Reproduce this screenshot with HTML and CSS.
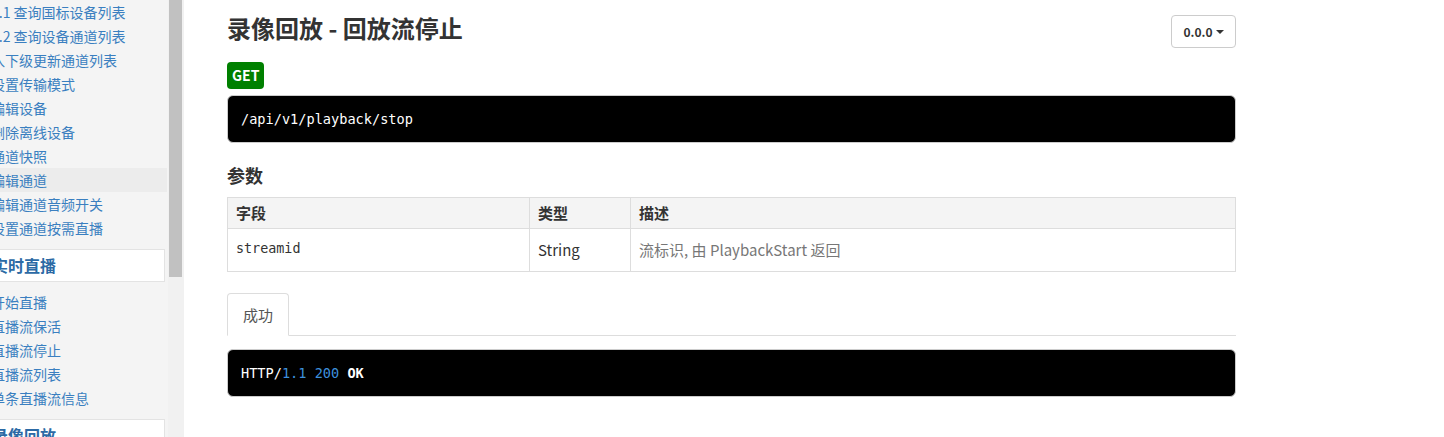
FILE: index.html
```html
<!DOCTYPE html>
<html lang="zh">
<head>
<meta charset="utf-8">
<title>录像回放 - 回放流停止</title>
<link rel="stylesheet" href="styles.css">
</head>
<body>
<div class="page">
  <aside class="sidebar">
    <div class="nav-pane">
      <div class="nav">
        <a class="item" href="#">2.1 查询国标设备列表</a>
        <a class="item" href="#">2.2 查询设备通道列表</a>
        <a class="item" href="#">入下级更新通道列表</a>
        <a class="item" href="#">设置传输模式</a>
        <a class="item" href="#">编辑设备</a>
        <a class="item" href="#">删除离线设备</a>
        <a class="item" href="#">通道快照</a>
        <a class="item active" href="#">编辑通道</a>
        <a class="item" href="#">编辑通道音频开关</a>
        <a class="item" href="#">设置通道按需直播</a>
        <div class="group">实时直播</div>
        <a class="item" href="#">开始直播</a>
        <a class="item" href="#">直播流保活</a>
        <a class="item" href="#">直播流停止</a>
        <a class="item" href="#">直播流列表</a>
        <a class="item" href="#">单条直播流信息</a>
        <div class="group">录像回放</div>
      </div>
    </div>
    <div class="scrollbar"><div class="thumb"></div></div>
  </aside>

  <main class="content">
    <div class="head">
      <h1 class="title">录像回放 - 回放流停止</h1>
      <button class="version">0.0.0<span class="caret"></span></button>
    </div>
    <span class="method">GET</span>
    <pre class="code">/api/v1/playback/stop</pre>

    <h2 class="sub">参数</h2>
    <table class="params">
      <colgroup>
        <col class="c1"><col class="c2"><col class="c3">
      </colgroup>
      <thead>
        <tr><th>字段</th><th>类型</th><th>描述</th></tr>
      </thead>
      <tbody>
        <tr><td class="mono">streamid</td><td>String</td><td class="desc">流标识, 由 PlaybackStart 返回</td></tr>
      </tbody>
    </table>

    <div class="tabs"><span class="tab">成功</span></div>
    <pre class="code resp">HTTP/<span class="num">1.1</span> <span class="num">200</span> <span class="ok">OK</span></pre>
  </main>
</div>
</body>
</html>
```

FILE: styles.css
```css
html, body {
  margin: 0;
  padding: 0;
  background: #fff;
}
body {
  font-family: "Noto Sans CJK SC", sans-serif;
  color: #333;
  height: 437px;
  overflow: hidden;
}
.page {
  display: flex;
  align-items: flex-start;
  height: 437px;
}

/* sidebar */
.sidebar {
  display: flex;
  width: 184px;
  height: 437px;
  flex-shrink: 0;
}
.nav-pane {
  width: 168px;
  height: 437px;
  background: #f4f4f4;
  overflow: hidden;
}
.nav {
  margin-left: -20px;
  width: 187px;
  display: flex;
  flex-direction: column;
}
.item {
  display: block;
  height: 24px;
  line-height: 24px;
  padding-left: 11px;
  font-size: 14px;
  color: #3a7fc0;
  text-decoration: none;
  white-space: nowrap;
}
.item.active {
  background: #ececec;
}
.group {
  margin: 9px 2px 8px 0;
  height: 31px;
  line-height: 31px;
  padding-left: 11px;
  background: #fff;
  border: 1px solid #e3e3e3;
  font-size: 16px;
  font-weight: bold;
  color: #2c6aa5;
  white-space: nowrap;
}
.scrollbar {
  width: 16px;
  height: 437px;
  background: #f1f1f1;
  padding-left: 1px;
  box-sizing: border-box;
}
.thumb {
  width: 13px;
  height: 277px;
  background: #c1c1c1;
}

/* content */
.content {
  margin-left: 43px;
  width: 1009px;
  display: flex;
  flex-direction: column;
  align-items: flex-start;
}
.head {
  width: 100%;
  display: flex;
  justify-content: space-between;
  align-items: flex-start;
  padding-top: 12px;
  margin-bottom: 14px;
}
.title {
  margin: 0;
  font-size: 24px;
  line-height: 32px;
  font-weight: bold;
  color: #333;
}
.version {
  margin-top: 3px;
  width: 65px;
  height: 33px;
  background: #fff;
  border: 1px solid #ccc;
  border-radius: 4px;
  font-family: "Noto Sans CJK SC", sans-serif;
  font-size: 12px;
  font-weight: bold;
  color: #333;
  padding: 0;
  display: flex;
  align-items: center;
  justify-content: center;
  gap: 3px;
}
.caret {
  width: 0;
  height: 0;
  border-left: 4px solid transparent;
  border-right: 4px solid transparent;
  border-top: 4px solid #333;
}
.method {
  display: inline-block;
  height: 27px;
  line-height: 27px;
  padding: 0 5px;
  background: #008000;
  color: #fff;
  font-size: 14px;
  font-weight: bold;
  border-radius: 4px;
}
.code {
  margin: 6px 0 0;
  width: 100%;
  box-sizing: border-box;
  background: #000;
  color: #fff;
  border: 1px solid #ccc;
  border-radius: 6px;
  padding: 13px 13px;
  font-family: "DejaVu Sans Mono", monospace;
  font-size: 13.6px;
  line-height: 20px;
}
.sub {
  margin: 20px 0 10px;
  font-size: 18px;
  line-height: 24px;
  font-weight: bold;
  color: #333;
}
.params {
  width: 100%;
  border-collapse: collapse;
  border: 1px solid #ddd;
  font-size: 15px;
}
.c1 { width: 302px; }
.c2 { width: 101px; }
.params th {
  text-align: left;
  background: #f4f4f4;
  border: 1px solid #ddd;
  padding: 5px 8px;
  line-height: 20px;
  font-weight: bold;
  color: #333;
}
.params td {
  border: 1px solid #ddd;
  padding: 11px 8px;
  line-height: 20px;
  color: #333;
}
.params td.mono {
  font-family: "DejaVu Sans Mono", monospace;
  font-size: 13.4px;
  vertical-align: top;
  padding-top: 10px;
}
.params td.desc {
  color: #777;
}
.tabs {
  margin-top: 21px;
  width: 100%;
  border-bottom: 1px solid #ddd;
  display: flex;
  height: 42px;
}
.tab {
  display: block;
  padding: 10px 15px;
  line-height: 21px;
  font-size: 15px;
  color: #555;
  border: 1px solid #ddd;
  border-bottom-color: #fff;
  border-radius: 4px 4px 0 0;
  background: #fff;
  height: 21px;
  margin-bottom: -1px;
}
.resp {
  margin-top: 13px;
}
.num {
  color: #3d8fdc;
}
.ok {
  font-weight: bold;
}
```
